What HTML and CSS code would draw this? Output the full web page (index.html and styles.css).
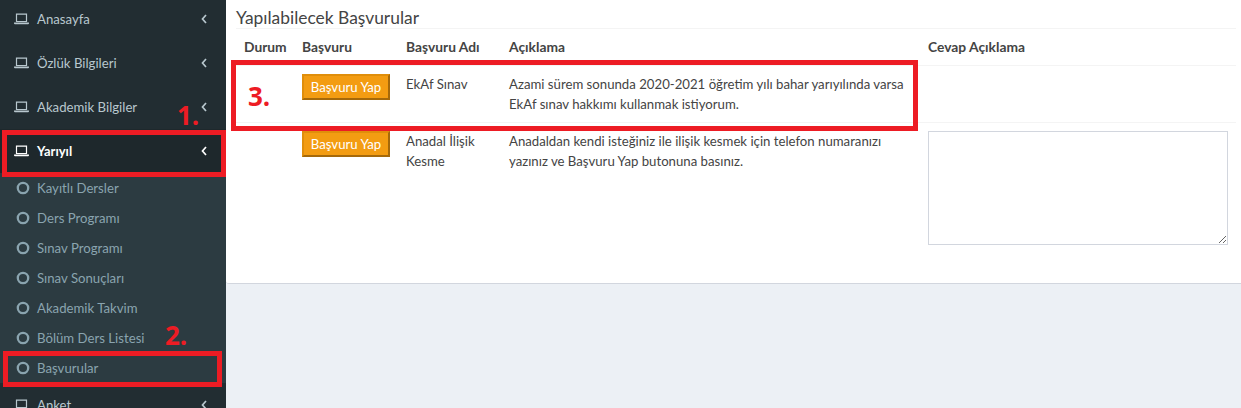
FILE: index.html
```html
<!DOCTYPE html>
<html lang="tr">
<head>
<meta charset="utf-8">
<title>Yapılabilecek Başvurular</title>
<link rel="stylesheet" href="styles.css">
</head>
<body>
<svg class="defs" width="0" height="0" aria-hidden="true">
  <symbol id="laptop" viewBox="0 0 15 12">
    <path d="M2.5 1.2h10v7.3h-10z" fill="none" stroke="currentColor" stroke-width="1.2"/>
    <path d="M0 9.4h15v.9a1 1 0 0 1-1 1H1a1 1 0 0 1-1-1z" fill="currentColor"/>
  </symbol>
  <symbol id="chev" viewBox="0 0 8 12">
    <path d="M6 2 2.5 6 6 10" fill="none" stroke="currentColor" stroke-width="1.7"/>
  </symbol>
  <symbol id="ring" viewBox="0 0 14 14">
    <circle cx="7" cy="7" r="5.2" fill="none" stroke="currentColor" stroke-width="2.3"/>
  </symbol>
</svg>
<div class="app">
  <aside class="sidebar">
    <ul class="menu">
      <li class="item"><svg class="ico"><use href="#laptop"/></svg><span>Anasayfa</span><svg class="chev"><use href="#chev"/></svg></li>
      <li class="item"><svg class="ico"><use href="#laptop"/></svg><span>Özlük Bilgileri</span><svg class="chev"><use href="#chev"/></svg></li>
      <li class="item"><svg class="ico"><use href="#laptop"/></svg><span>Akademik Bilgiler</span><svg class="chev"><use href="#chev"/></svg></li>
      <li class="item active"><svg class="ico"><use href="#laptop"/></svg><span>Yarıyıl</span><svg class="chev"><use href="#chev"/></svg></li>
      <li>
        <ul class="sub">
          <li class="subitem"><svg class="ring"><use href="#ring"/></svg><span>Kayıtlı Dersler</span></li>
          <li class="subitem"><svg class="ring"><use href="#ring"/></svg><span>Ders Programı</span></li>
          <li class="subitem"><svg class="ring"><use href="#ring"/></svg><span>Sınav Programı</span></li>
          <li class="subitem"><svg class="ring"><use href="#ring"/></svg><span>Sınav Sonuçları</span></li>
          <li class="subitem"><svg class="ring"><use href="#ring"/></svg><span>Akademik Takvim</span></li>
          <li class="subitem"><svg class="ring"><use href="#ring"/></svg><span>Bölüm Ders Listesi</span></li>
          <li class="subitem"><svg class="ring"><use href="#ring"/></svg><span>Başvurular</span></li>
        </ul>
      </li>
      <li class="item"><svg class="ico"><use href="#laptop"/></svg><span>Anket</span><svg class="chev"><use href="#chev"/></svg></li>
    </ul>
  </aside>
  <main class="content">
    <section class="box">
      <h3 class="title">Yapılabilecek Başvurular</h3>
      <table class="grid">
        <colgroup>
          <col class="c1"><col class="c2"><col class="c3"><col class="c4"><col class="c5">
        </colgroup>
        <thead>
          <tr><th>Durum</th><th>Başvuru</th><th>Başvuru Adı</th><th>Açıklama</th><th>Cevap Açıklama</th></tr>
        </thead>
        <tbody>
          <tr class="row1">
            <td></td>
            <td><button class="btn" type="button">Başvuru Yap</button></td>
            <td>EkAf Sınav</td>
            <td>Azami sürem sonunda 2020-2021 öğretim yılı bahar yarıyılında varsa EkAf sınav hakkımı kullanmak istiyorum.</td>
            <td></td>
          </tr>
          <tr class="row2">
            <td></td>
            <td><button class="btn" type="button">Başvuru Yap</button></td>
            <td>Anadal İlişik Kesme</td>
            <td>Anadaldan kendi isteğiniz ile ilişik kesmek için telefon numaranızı yazınız ve Başvuru Yap butonuna basınız.</td>
            <td><textarea class="answer"></textarea></td>
          </tr>
        </tbody>
      </table>
    </section>
  </main>
</div>
<div class="mark mark1"></div>
<div class="mark mark2"></div>
<div class="mark mark3"></div>
<div class="num num1">1.</div>
<div class="num num2">2.</div>
<div class="num num3">3.</div>
</body>
</html>
```
FILE: styles.css
```css
* { box-sizing: border-box; }
html, body { height: 100%; }
body {
  margin: 0;
  overflow: hidden;
  background: #ecf0f5;
  color: #444;
  font-family: "Lato", "Noto Sans", sans-serif;
  font-size: 13.2px;
  line-height: 20px;
}
.defs { position: absolute; }
.app { display: flex; height: 408px; overflow: hidden; }

.sidebar { flex: 0 0 226px; background: #222d32; overflow: hidden; }
.menu, .sub { list-style: none; margin: 0; padding: 0; }
.menu { margin-top: -3px; }
.item {
  display: flex;
  align-items: center;
  height: 44px;
  padding-left: 14px;
  padding-right: 18px;
  color: #b8c7ce;
}
.item.active { background: #1e282c; color: #fff; font-weight: 700; font-size: 13px; }
.item span { flex: 1; margin-left: 8px; }
.ico { width: 15px; height: 12px; }
.chev { width: 8px; height: 12px; }
.sub { background: #2c3b41; }
.subitem {
  display: flex;
  align-items: center;
  height: 30px;
  padding-left: 16px;
  color: #8aa4af;
}
.ring { width: 14px; height: 14px; }
.subitem span { margin-left: 7px; }

.content { flex: 1; min-width: 0; }
.box {
  height: 284px;
  padding: 0 5px 0 10px;
  background: #fff;
  border-bottom: 1px solid #d2d6de;
  border-radius: 0 0 0 3px;
}
.title {
  margin: 0;
  height: 29px;
  padding-top: 8px;
  border-bottom: 1px solid #f4f4f4;
  font-size: 17.4px;
  font-weight: 400;
  line-height: 20px;
}
.grid { width: 1000px; border-collapse: collapse; table-layout: fixed; }
.c1 { width: 58px; }
.c2 { width: 104px; }
.c3 { width: 103px; }
.c4 { width: 419px; }
.c5 { width: 316px; }
th {
  height: 36px;
  padding: 8px;
  border-bottom: 1px solid #f4f4f4;
  text-align: left;
  font-size: 13.8px;
  font-weight: 700;
}
td { padding: 8px; vertical-align: top; }
.row1 td { height: 57px; border-bottom: 1px solid #f4f4f4; }
.btn {
  display: block;
  width: 88px;
  height: 26px;
  padding: 0;
  border: 2px solid;
  border-color: #e08e0b #a5690a #a5690a #e08e0b;
  border-radius: 0;
  background: #f39c12;
  color: #fff;
  font: 400 13.2px/20px "Lato", "Noto Sans", sans-serif;
}
.answer {
  display: block;
  width: 300px;
  height: 114px;
  border: 1px solid #d2d6de;
  background: #fff;
  resize: vertical;
}

.mark { position: absolute; border: 5px solid #ed1c24; }
.mark1 { left: 2px; top: 130px; width: 224px; height: 47px; }
.mark2 { left: 3px; top: 351px; width: 219px; height: 36px; }
.mark3 { left: 231px; top: 60px; width: 687px; height: 71px; }
.num {
  position: absolute;
  color: #ed1c24;
  font: 700 26px/30px "Open Sans", sans-serif;
}
.num1 { left: 177px; top: 100px; }
.num2 { left: 165px; top: 320px; }
.num3 { left: 248px; top: 81px; }
```
